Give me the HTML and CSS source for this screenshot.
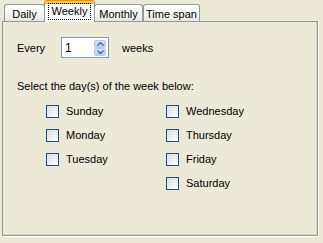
FILE: index.html
```html
<!DOCTYPE html>
<html lang="en">
<head>
  <meta charset="UTF-8">
  <title>Recurrence</title>
  <link rel="stylesheet" href="styles.css">
</head>
<body>

<div class="tabs">
  <div class="tab tab-daily">Daily</div>
  <div class="tab tab-weekly active"><span class="focus">Weekly</span></div>
  <div class="tab tab-monthly">Monthly</div>
  <div class="tab tab-span">Time span</div>
</div>

<div class="panel">
  <!-- Every N weeks -->
  <div class="every-row">
    <span class="every-label">Every</span>
    <div class="spin">
      <span class="spin-value">1</span>
      <div class="spin-buttons">
        <div class="spin-btn">
          <svg width="7" height="4" viewBox="0 0 7 4"><path d="M0.5 3.5 L3.5 0.5 L6.5 3.5" fill="none" stroke="#4d6185" stroke-width="1.3"/></svg>
        </div>
        <div class="spin-btn">
          <svg width="7" height="4" viewBox="0 0 7 4"><path d="M0.5 0.5 L3.5 3.5 L6.5 0.5" fill="none" stroke="#4d6185" stroke-width="1.3"/></svg>
        </div>
      </div>
    </div>
    <span class="weeks-label">weeks</span>
  </div>

  <div class="select-text">Select the day(s) of the week below:</div>

  <!-- Days -->
  <div class="days">
    <label class="day"><span class="box"></span>Sunday</label>
    <label class="day"><span class="box"></span>Wednesday</label>
    <label class="day"><span class="box"></span>Monday</label>
    <label class="day"><span class="box"></span>Thursday</label>
    <label class="day"><span class="box"></span>Tuesday</label>
    <label class="day"><span class="box"></span>Friday</label>
    <span></span>
    <label class="day"><span class="box"></span>Saturday</label>
  </div>
</div>

</body>
</html>
```

FILE: styles.css
```css
body {
  margin: 0;
  padding: 0;
  background-color: #ece9d8;
  font-family: "Liberation Sans", Arial, sans-serif;
  font-size: 11px;
  color: #000;
  width: 323px;
  height: 243px;
  overflow: hidden;
}

.tabs {
  display: flex;
  align-items: flex-end;
  height: 20px;
  padding: 1px 0 0 4px;
  position: relative;
  z-index: 2;
}

.tab {
  box-sizing: border-box;
  height: 17px;
  border: 1px solid #919b9c;
  border-bottom: none;
  border-radius: 3px 3px 0 0;
  background: linear-gradient(#ffffff, #f3f3ef 70%, #e6e5dd);
  display: flex;
  justify-content: center;
  align-items: center;
  padding-top: 1px;
}

.tab-daily { width: 41px; }
.tab-monthly { width: 49px; }
.tab-span { width: 57px; }

.tab.active {
  width: 51px;
  height: 21px;
  margin-bottom: -1px;
  margin-left: -1px;
  margin-right: -1px;
  background: #fcfcfe;
  border-top: 2px solid #ffc83c;
  box-shadow: inset 0 1px #f5b94a, 0 -1px #e68b2c;
  padding-top: 0;
  padding-bottom: 2px;
}

.focus {
  border: 1px dotted #000;
  padding: 1px 3px;
  line-height: 13px;
}

.panel {
  box-sizing: border-box;
  margin-left: 2px;
  width: 316px;
  height: 215px;
  border: 1px solid #919b9c;
  box-shadow: inset -1px -1px #d5d2c4, 1px 1px #ffffff;
  padding: 15px 0 0 14px;
  position: relative;
  z-index: 1;
}

.every-row {
  display: flex;
  align-items: center;
  height: 21px;
}

.every-label {
  width: 44px;
}

.spin {
  box-sizing: border-box;
  width: 48px;
  height: 21px;
  border: 1px solid #7f9db9;
  background: #fff;
  display: flex;
  align-items: center;
  justify-content: space-between;
  padding: 0 2px 0 3px;
}

.spin-value {
  font-size: 12px;
}

.spin-buttons {
  display: flex;
  flex-direction: column;
}

.spin-btn {
  box-sizing: border-box;
  width: 12px;
  height: 8px;
  border: 1px solid #b6c6f0;
  border-radius: 2px;
  background: linear-gradient(#dde6fc, #b9c9f3);
  display: flex;
  align-items: center;
  justify-content: center;
}

.weeks-label {
  margin-left: 13px;
}

.select-text {
  margin-top: 22px;
  line-height: 13px;
}

.days {
  display: grid;
  grid-template-columns: 120px 120px;
  grid-auto-rows: 14px;
  row-gap: 10px;
  margin-top: 11px;
  margin-left: 29px;
}

.day {
  display: flex;
  align-items: center;
  gap: 7px;
}

.box {
  box-sizing: border-box;
  width: 13px;
  height: 13px;
  border: 1px solid #1c5180;
  background: linear-gradient(135deg, #dcdbd5, #ffffff);
}
```
